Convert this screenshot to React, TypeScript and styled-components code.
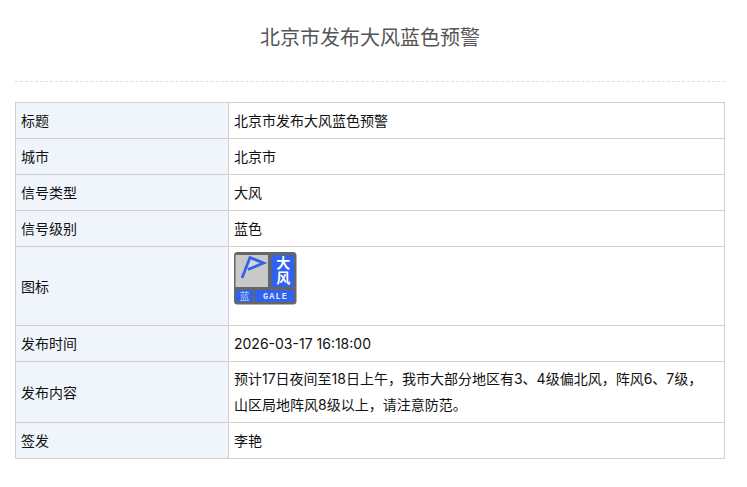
import React from "react";
import styled, { createGlobalStyle } from "styled-components";

const Global = createGlobalStyle`
  html, body { margin: 0; padding: 0; background: #fff; }
  body { font-family: Inter, "Noto Sans CJK SC", sans-serif; color: #111; }
`;
const Page = styled.main`
  width: 747px;
  height: 487px;
  padding: 0 22px 0 15px;
  box-sizing: border-box;
  overflow: hidden;
`;
const Header = styled.header`
  height: 82px;
  box-sizing: border-box;
  border-bottom: 1px dashed #ddd;
  padding-top: 23px;
  text-align: center;
`;
const Title = styled.h1`
  margin: 0;
  font-size: 20px;
  font-weight: 400;
  line-height: 30px;
  color: #555;
`;
const Table = styled.table`
  width: 710px;
  margin-top: 20px;
  border-collapse: collapse;
  table-layout: fixed;
  font-size: 14px;
  line-height: 26px;
`;
const Row = styled.tr<{ $h: number }>`
  height: ${(p) => p.$h}px;
`;
const Label = styled.th<{ $tall?: boolean }>`
  width: 213px;
  box-sizing: border-box;
  padding: ${(p) => (p.$tall ? "2px" : "0")} 5px 0;
  border: 1px solid #d0d0d0;
  background: #f0f5fc;
  font-weight: 400;
  text-align: left;
  color: #111;
`;
const Value = styled.td`
  padding: 0 20px 0 5px;
  border: 1px solid #d0d0d0;
  color: #111;
`;
const IconCell = styled(Value)`
  vertical-align: top;
  padding-top: 5px;
`;
const IconSvg = styled.svg`
  display: block;
`;
const Icon = () => (
  <IconSvg width="63" height="53" viewBox="0 0 63 53">
    <rect x="0" y="0" width="62.5" height="52.5" rx="3.5" fill="#666" />
    <rect x="1.5" y="3" width="32.5" height="32" fill="#c9c9c9" />
    <rect x="37.5" y="3" width="22.5" height="32" fill="#2f62ee" />
    <rect x="2" y="38" width="16.7" height="11.7" fill="#2f62ee" />
    <rect x="21" y="38" width="39" height="11.7" fill="#2f62ee" />
    <path d="M8 26 L16 5.5 L29.5 11 L14 17.5" fill="#ddd" fillOpacity="0.6" stroke="#2f62ee" strokeWidth="2.8" />
    <text x="48.7" y="4" fontSize="14" fontWeight="700" fill="#fff" writingMode="vertical-rl" letterSpacing="1">大风</text>
    <text x="10.4" y="48" fontSize="10" fill="#b9c6ef" textAnchor="middle">蓝</text>
    <text x="41.5" y="47" fontSize="8.5" fontWeight="700" letterSpacing="1.2" fill="#e4eafc" textAnchor="middle" fontFamily="'Liberation Mono', monospace">GALE</text>
  </IconSvg>
);

export default function App() {
  return (
    <Page>
      <Global />
      <Header>
        <Title>北京市发布大风蓝色预警</Title>
      </Header>
      <Table>
        <tbody>
          <Row $h={36}><Label>标题</Label><Value>北京市发布大风蓝色预警</Value></Row>
          <Row $h={36}><Label>城市</Label><Value>北京市</Value></Row>
          <Row $h={36}><Label>信号类型</Label><Value>大风</Value></Row>
          <Row $h={36}><Label>信号级别</Label><Value>蓝色</Value></Row>
          <Row $h={79}><Label $tall>图标</Label><IconCell><Icon /></IconCell></Row>
          <Row $h={36}><Label>发布时间</Label><Value>2026-03-17 16:18:00</Value></Row>
          <Row $h={61}><Label $tall>发布内容</Label><Value>预计17日夜间至18日上午，我市大部分地区有3、4级偏北风，阵风6、7级，山区局地阵风8级以上，请注意防范。</Value></Row>
          <Row $h={36}><Label>签发</Label><Value>李艳</Value></Row>
        </tbody>
      </Table>
    </Page>
  );
}
